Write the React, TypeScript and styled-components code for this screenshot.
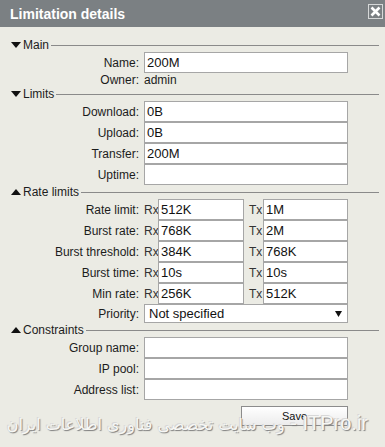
import styled, { createGlobalStyle } from "styled-components";

const GlobalStyle = createGlobalStyle`
  html, body {
    margin: 0;
    padding: 0;
    background: #ebebe4;
  }
  body {
    font-family: "Liberation Sans", Arial, sans-serif;
    font-size: 12px;
    color: #1c1c1c;
  }
`;

const Dialog = styled.div`
  position: relative;
  width: 385px;
  height: 447px;
  overflow: hidden;
  background: #ebebe4;
`;

const TitleBar = styled.div`
  height: 27px;
  background: #7b8083;
  display: flex;
  align-items: center;
  justify-content: space-between;
  padding: 0 2px 0 10px;
`;

const Title = styled.h1`
  margin: 0;
  font-size: 14px;
  font-weight: bold;
  color: #ffffff;
`;

const CloseButton = styled.button`
  align-self: flex-start;
  margin-top: 4px;
  width: 15px;
  height: 15px;
  padding: 0;
  border: 1px solid #d6d8d8;
  background: transparent;
  display: flex;
  align-items: center;
  justify-content: center;

  svg {
    width: 11px;
    height: 11px;
  }
`;

const Body = styled.div`
  padding-top: 11px;
`;

const SectionHeader = styled.div`
  height: 14px;
  display: flex;
  align-items: center;
  padding: 0 6px 0 11px;
  font-size: 12px;

  svg {
    width: 10px;
    height: 6px;
    margin-right: 2px;
  }
`;

const HeaderLine = styled.div`
  flex: 1;
  height: 1px;
  margin-left: 2px;
  background: #8a8a8a;
`;

const Grid = styled.div`
  display: grid;
  grid-template-columns: 139px 204px;
  column-gap: 5px;
`;

const Label = styled.div<{ $short?: boolean }>`
  height: ${(p) => (p.$short ? "14px" : "21px")};
  display: flex;
  align-items: center;
  justify-content: flex-end;
`;

const Text = styled.div`
  height: 14px;
  display: flex;
  align-items: center;
`;

const Input = styled.input<{ $w?: number }>`
  box-sizing: border-box;
  width: ${(p) => p.$w ?? 204}px;
  height: 21px;
  margin: 0;
  padding: 0 2px;
  border: 1px solid #a6a6a6;
  border-radius: 0;
  background: #ffffff;
  font-family: "Liberation Sans", Arial, sans-serif;
  font-size: 13px;
  color: #111;
  outline: none;
`;

const PairField = styled.div`
  display: flex;
  align-items: center;
  width: 206px;
`;

const Dir = styled.span<{ $gap?: number }>`
  width: 14px;
  margin-left: ${(p) => p.$gap ?? 0}px;
  color: #333;
`;

const SelectBox = styled.div`
  box-sizing: border-box;
  width: 204px;
  height: 19px;
  border: 1px solid #a6a6a6;
  background: #ffffff;
  display: flex;
  align-items: center;
  justify-content: space-between;
  padding: 0 5px 0 4px;
  font-size: 13px;
  color: #111;

  svg {
    width: 7px;
    height: 6px;
  }
`;

const Footer = styled.div`
  display: flex;
  justify-content: flex-end;
  padding: 6px 37px 0 0;
`;

const SaveButton = styled.button`
  width: 107px;
  height: 20px;
  border: 1px solid #8c8c8c;
  background: linear-gradient(#ffffff, #ececec);
  font-family: "Liberation Sans", Arial, sans-serif;
  font-size: 11px;
  color: #111;
  padding: 0;
`;

const Watermark = styled.div`
  position: absolute;
  left: 14px;
  width: 354px;
  top: 412px;
  direction: rtl;
  white-space: nowrap;
  font-family: "Liberation Sans", "DejaVu Sans", sans-serif;
  font-size: 20px;
  color: #f7f7f4;
  text-shadow: 1px 1px 1px #7d7d7d, -1px -1px 0 #d8d8d8;
  pointer-events: none;
`;

const Persian = styled.span`
  font-family: "DejaVu Sans", sans-serif;
  font-size: 16px;
`;

const Triangle = ({ up }: { up?: boolean }) => (
  <svg viewBox="0 0 10 6">
    <polygon points={up ? "0,6 10,6 5,0" : "0,0 10,0 5,6"} fill="#111" />
  </svg>
);

const Header = ({ title, up }: { title: string; up?: boolean }) => (
  <SectionHeader>
    <Triangle up={up} />
    {title}
    <HeaderLine />
  </SectionHeader>
);

const Field = ({ label, value = "" }: { label: string; value?: string }) => (
  <>
    <Label>{label}:</Label>
    <Input readOnly value={value} />
  </>
);

const Pair = ({ label, rx, tx }: { label: string; rx: string; tx: string }) => (
  <>
    <Label>{label}:</Label>
    <PairField>
      <Dir>Rx</Dir>
      <Input $w={86} readOnly value={rx} />
      <Dir $gap={5}>Tx</Dir>
      <Input $w={85} readOnly value={tx} />
    </PairField>
  </>
);

const rates = [
  { label: "Rate limit", rx: "512K", tx: "1M" },
  { label: "Burst rate", rx: "768K", tx: "2M" },
  { label: "Burst threshold", rx: "384K", tx: "768K" },
  { label: "Burst time", rx: "10s", tx: "10s" },
  { label: "Min rate", rx: "256K", tx: "512K" },
];

export default function App() {
  return (
    <Dialog>
      <GlobalStyle />
      <TitleBar>
        <Title>Limitation details</Title>
        <CloseButton aria-label="Close">
          <svg viewBox="0 0 11 11">
            <path d="M1.5 1.5 L9.5 9.5 M9.5 1.5 L1.5 9.5" stroke="#fff" strokeWidth={2.6} />
          </svg>
        </CloseButton>
      </TitleBar>

      <Body>
        <Header title="Main" />
        <Grid>
          <Field label="Name" value="200M" />
          <Label $short>Owner:</Label>
          <Text>admin</Text>
        </Grid>

        <Header title="Limits" />
        <Grid>
          <Field label="Download" value="0B" />
          <Field label="Upload" value="0B" />
          <Field label="Transfer" value="200M" />
          <Field label="Uptime" />
        </Grid>

        <Header title="Rate limits" up />
        <Grid>
          {rates.map((r) => (
            <Pair key={r.label} {...r} />
          ))}
          <Label style={{ height: 19 }}>Priority:</Label>
          <SelectBox>
            Not specified
            <svg viewBox="0 0 7 6">
              <polygon points="0,0 7,0 3.5,6" fill="#111" />
            </svg>
          </SelectBox>
        </Grid>

        <Header title="Constraints" up />
        <Grid>
          <Field label="Group name" />
          <Field label="IP pool" />
          <Field label="Address list" />
        </Grid>

        <Footer>
          <SaveButton>Save</SaveButton>
        </Footer>
      </Body>

      <Watermark>
        ITPro.ir - <Persian>وب سایت تخصصی فناوری اطلاعات ایران</Persian>
      </Watermark>
    </Dialog>
  );
}
